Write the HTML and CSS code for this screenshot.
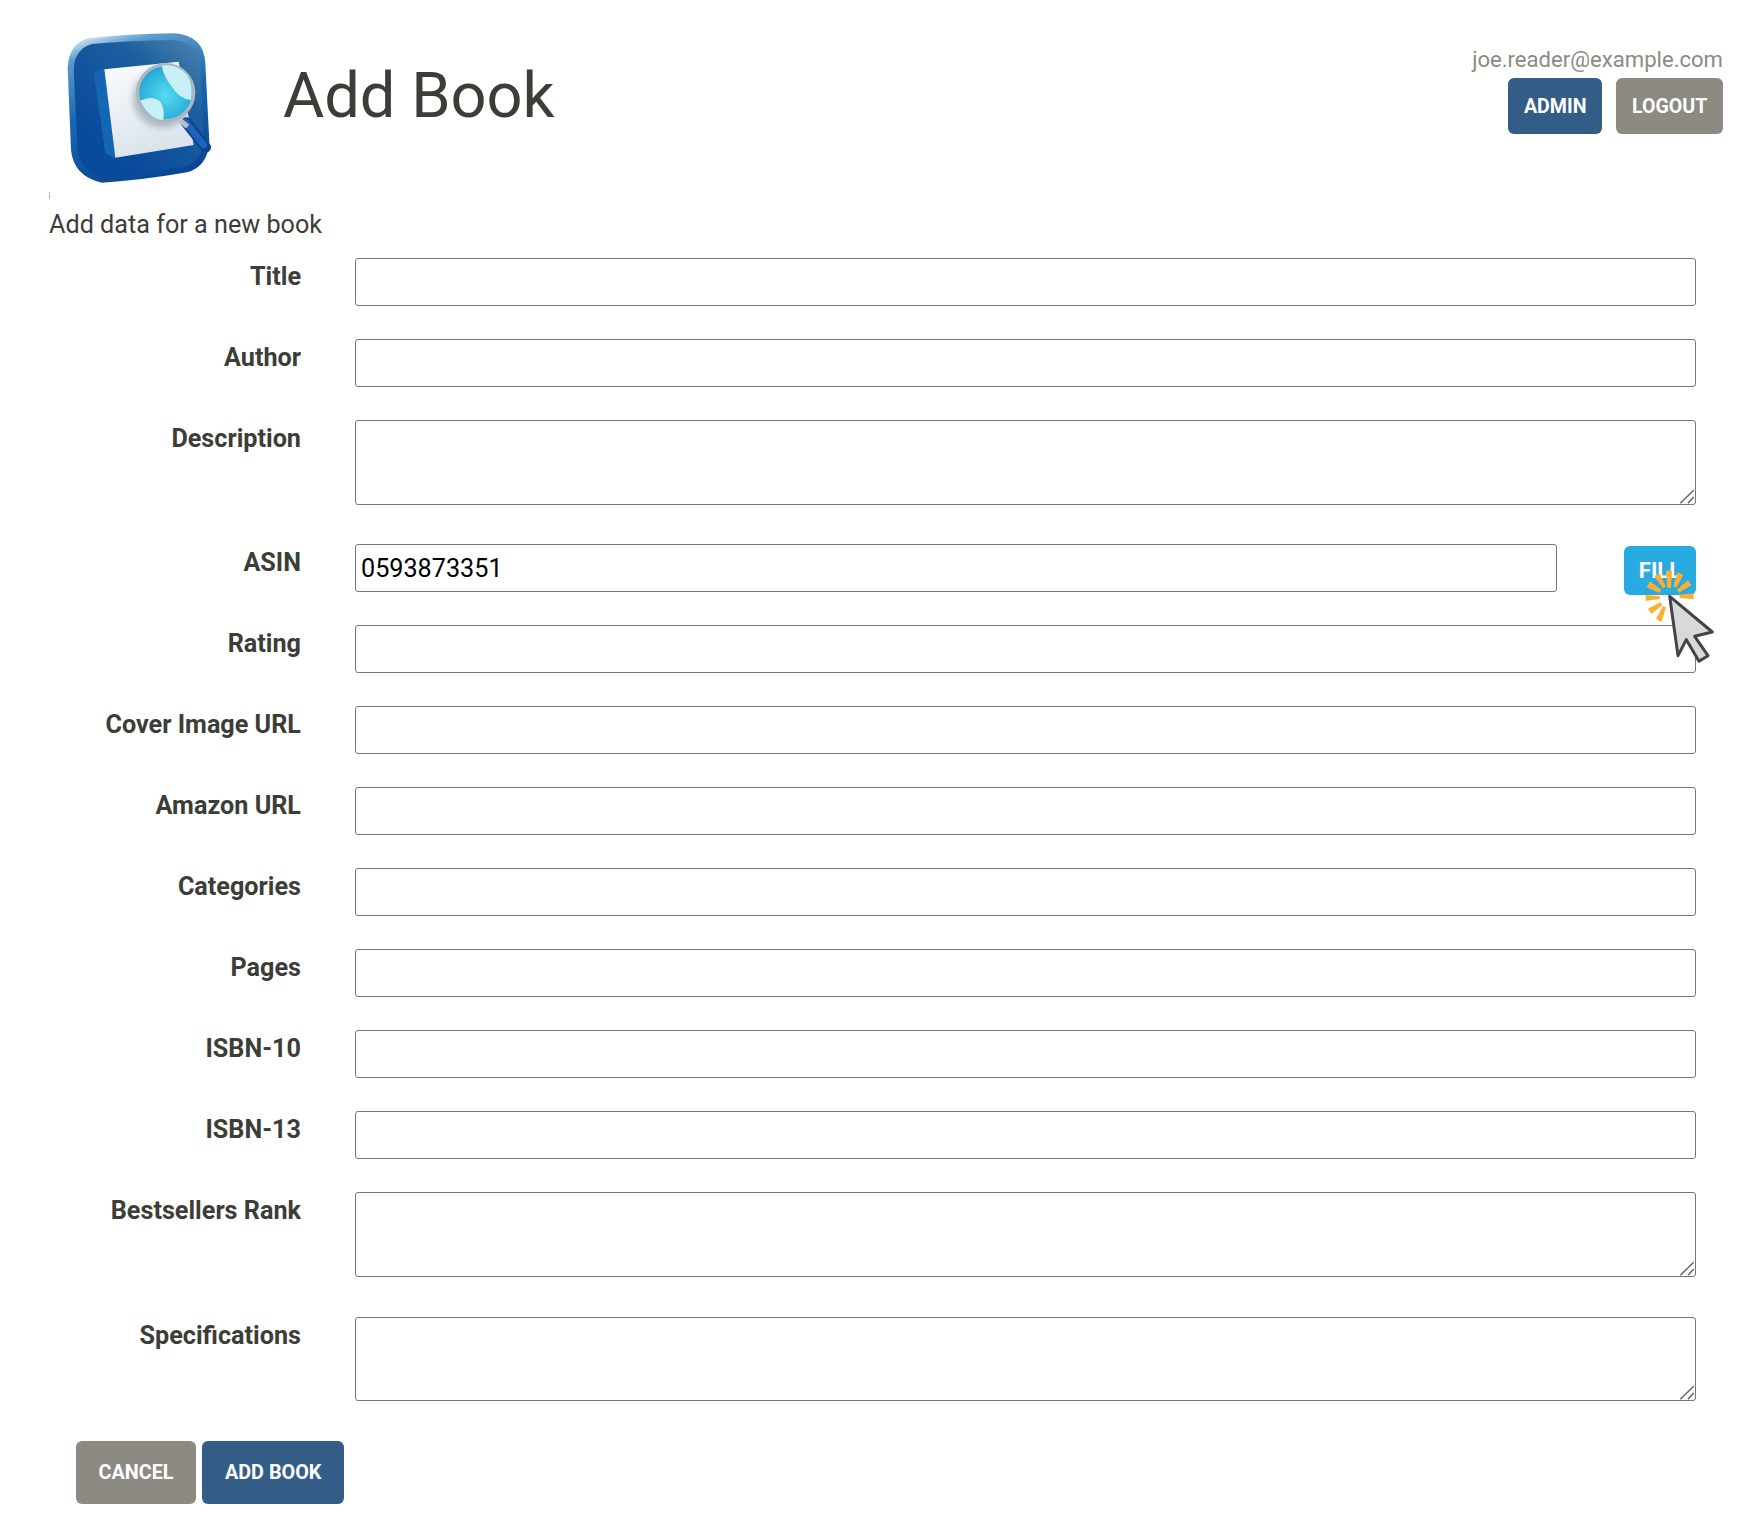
FILE: index.html
```html
<!DOCTYPE html>
<html lang="en">
<head>
    <meta charset="UTF-8">
    <meta name="viewport" content="width=device-width, initial-scale=1">
    <title>Add Book</title>
    <link rel="stylesheet" href="styles.css">
</head>
<body>
    <header class="top">
        <div class="logo-box">
            <svg class="logo" viewBox="110 60 440 460" aria-hidden="true">
                <defs>
                    <linearGradient id="bodyGrad" x1="0.95" y1="0" x2="0.1" y2="1">
                        <stop offset="0" stop-color="#4d83ad"/>
                        <stop offset="0.3" stop-color="#1c5f9f"/>
                        <stop offset="0.75" stop-color="#0a4c9b"/>
                        <stop offset="1" stop-color="#054a9f"/>
                    </linearGradient>
                    <linearGradient id="rimGrad" x1="0.2" y1="0" x2="0.5" y2="1">
                        <stop offset="0" stop-color="#d3e6f3"/>
                        <stop offset="0.12" stop-color="#5d9ccd"/>
                        <stop offset="0.5" stop-color="#1a66b0"/>
                        <stop offset="1" stop-color="#0a4694"/>
                    </linearGradient>
                    <linearGradient id="paperGrad" x1="0" y1="0" x2="0.3" y2="1">
                        <stop offset="0" stop-color="#fbfdfe"/>
                        <stop offset="1" stop-color="#dbe4ec"/>
                    </linearGradient>
                    <radialGradient id="lensGrad" cx="0.5" cy="0.55" r="0.6">
                        <stop offset="0" stop-color="#55dcf0"/>
                        <stop offset="1" stop-color="#1f9ed2"/>
                    </radialGradient>
                    <filter id="soft" x="-20%" y="-20%" width="140%" height="140%">
                        <feGaussianBlur stdDeviation="2"/>
                    </filter>
                    <filter id="softer" x="-20%" y="-20%" width="140%" height="140%">
                        <feGaussianBlur stdDeviation="10"/>
                    </filter>
                </defs>
                <path d="M175 85Q300 72 430 70Q520 75 525 160L537 395Q532 470 470 487Q340 510 215 518Q130 500 122 420L112 175Q115 100 175 85Z" fill="url(#rimGrad)"/>
                <path d="M185 102Q300 92 425 90Q505 94 510 165L520 390Q515 455 462 470Q340 492 220 500Q148 488 142 415L130 180Q132 117 185 102Z" fill="url(#bodyGrad)"/>
                <path d="M190 185L222 175L255 445L225 430Z" fill="#1565b5"/>
                <path d="M222 178L445 155L490 405L255 443Z" fill="url(#paperGrad)"/>
                <circle cx="395" cy="265" r="88" fill="#5f6f80" opacity="0.4" filter="url(#softer)"/>
                <path d="M468 338L526 412" stroke="#0b4590" stroke-width="32" stroke-linecap="round"/>
                <path d="M465 335L520 405" stroke="#1f62b8" stroke-width="20" stroke-linecap="round"/>
                <path d="M446 328L472 350" stroke="#b4c0ca" stroke-width="15"/>
                <circle cx="406" cy="248" r="84" fill="url(#lensGrad)" stroke="#aab8c2" stroke-width="10"/>
                <path d="M394 167Q440 160 470 195Q490 225 482 270Q445 265 425 230Q402 205 394 167Z" fill="#c9f0f7" filter="url(#soft)"/>
                <path d="M330 272Q365 255 390 275Q405 300 398 330Q355 325 330 272Z" fill="#c9f0f7" filter="url(#soft)"/>
            </svg>
            <span class="logo-mark"></span>
        </div>
        <h1 class="page-title">Add Book</h1>
        <div class="user-box">
            <div class="user-email">joe.reader@example.com</div>
            <div class="user-actions">
                <a class="btn btn-blue btn-small" href="#">ADMIN</a>
                <a class="btn btn-grey btn-small" href="#">LOGOUT</a>
            </div>
        </div>
    </header>

    <p class="intro">Add data for a new book</p>

    <form class="book-form">
        <div class="row">
            <label>Title</label>
            <input type="text">
        </div>
        <div class="row">
            <label>Author</label>
            <input type="text">
        </div>
        <div class="row row-area">
            <label>Description</label>
            <textarea></textarea>
        </div>
        <div class="row">
            <label>ASIN</label>
            <input class="asin" type="text" value="0593873351">
            <div class="fill-box">
                <button class="btn btn-fill" type="button">FILL</button>
                <svg class="click-cursor" viewBox="160 115 220 290" aria-hidden="true">
                    <g fill="#fbb034">
                        <polygon points="229,123 247,123 244,175 233,175"/>
                        <polygon points="264,128 281,135 260,175 251,170"/>
                        <polygon points="295,151 305,167 268,189 262,180"/>
                        <polygon points="312,191 312,209 270,205 270,195"/>
                        <polygon points="181,155 171,173 210,190 215,180"/>
                        <polygon points="209,130 194,140 220,176 228,170"/>
                        <polygon points="168,196 168,214 210,208 210,199"/>
                        <polygon points="175,237 185,253 218,227 212,218"/>
                        <polygon points="199,267 215,278 229,233 220,229"/>
                    </g>
                    <polygon points="240,200 368,307 315,320 355,378 328,395 290,330 265,378" fill="#d9d9d9" stroke="#444" stroke-width="9" stroke-linejoin="round"/>
                </svg>
            </div>
        </div>
        <div class="row">
            <label>Rating</label>
            <input type="text">
        </div>
        <div class="row">
            <label>Cover Image URL</label>
            <input type="text">
        </div>
        <div class="row">
            <label>Amazon URL</label>
            <input type="text">
        </div>
        <div class="row">
            <label>Categories</label>
            <input type="text">
        </div>
        <div class="row">
            <label>Pages</label>
            <input type="text">
        </div>
        <div class="row">
            <label>ISBN-10</label>
            <input type="text">
        </div>
        <div class="row">
            <label>ISBN-13</label>
            <input type="text">
        </div>
        <div class="row row-area row-rank">
            <label>Bestsellers Rank</label>
            <textarea></textarea>
        </div>
        <div class="row row-area row-specs">
            <label>Specifications</label>
            <textarea></textarea>
        </div>
        <div class="form-actions">
            <a class="btn btn-grey btn-large" href="#">CANCEL</a>
            <a class="btn btn-blue btn-large btn-add" href="#">ADD BOOK</a>
        </div>
    </form>
</body>
</html>
```

FILE: styles.css
```css
* {
    box-sizing: border-box;
}
body {
    margin: 0;
    background: #fff;
    color: #3d3d38;
    font-family: Roboto, "Liberation Sans", sans-serif;
    font-size: 25.2px;
}

/* header */
.top {
    display: flex;
    align-items: flex-start;
    height: 210px;
    padding: 30px 37px 0 49px;
}
.logo-box {
    width: 234px;
    height: 180px;
    display: flex;
    flex-direction: column;
}
.logo {
    width: 146.67px;
    height: 153.33px;
    margin-left: 17.67px;
}
.logo-mark {
    width: 1px;
    height: 7px;
    margin-top: 9px;
    background: #b5b5b5;
}
.page-title {
    margin: 28px 0 0;
    font-size: 63.2px;
    font-weight: 400;
    line-height: 75px;
}
.user-box {
    margin-left: auto;
    margin-top: 15px;
    text-align: right;
}
.user-email {
    color: #8c8a82;
    font-size: 22.1px;
    line-height: 28px;
}
.user-actions {
    display: flex;
    justify-content: flex-end;
    gap: 14px;
    margin-top: 5px;
}

/* buttons */
.btn {
    display: flex;
    align-items: center;
    justify-content: center;
    border: 0;
    border-radius: 6px;
    color: #fff;
    font-family: inherit;
    font-weight: 700;
    text-decoration: none;
}
.btn-blue {
    background: #335d87;
}
.btn-grey {
    background: #8c8a82;
}
.btn-small {
    height: 56px;
    padding: 0 15.7px;
    font-size: 19.6px;
}
.btn-large {
    height: 63px;
    padding: 0 22.5px;
    font-size: 19.8px;
}
.btn-add {
    padding: 0 23px;
}
.btn-fill {
    width: 72px;
    height: 49px;
    padding: 0;
    background: #29abe2;
    font-size: 22px;
}

.intro {
    margin: 0;
    padding-left: 49px;
    line-height: 29px;
}

/* form */
.book-form {
    width: 1696px;
    padding: 19px 0 0 49px;
}
.row {
    display: flex;
    align-items: flex-start;
    margin-bottom: 33px;
}
.row-area {
    margin-bottom: 39px;
}
.row-rank {
    margin-bottom: 40px;
}
.row label {
    flex: none;
    width: 252px;
    margin-right: 54px;
    padding-top: 5px;
    font-weight: 700;
    line-height: 28px;
    text-align: right;
}
.row input,
.row textarea {
    flex: 1;
    min-width: 0;
    margin: 0;
    padding: 0 5px;
    border: 1px solid #767676;
    border-radius: 3px;
    background: #fff;
    color: #000;
    font-family: inherit;
    font-size: 25.2px;
}
.row input {
    height: 48px;
}
.row textarea {
    height: 85px;
    resize: none;
    background: #fff url("data:image/svg+xml,%3Csvg xmlns='http://www.w3.org/2000/svg' width='16' height='16'%3E%3Cpath d='M1.3 15.3L14.7 2.3M9 15.3L14.7 9' stroke='%23666' stroke-width='1.5' fill='none'/%3E%3C/svg%3E") no-repeat right bottom;
}
.row-specs textarea {
    height: 84px;
}
.fill-box {
    position: relative;
    flex: none;
    width: 72px;
    height: 46px;
    margin-left: 67px;
    margin-top: 2px;
}
.click-cursor {
    position: absolute;
    left: 19.33px;
    top: 22.33px;
    width: 73.33px;
    height: 96.67px;
}
.form-actions {
    display: flex;
    gap: 6px;
    margin-left: 27px;
    margin-top: 40px;
}
```
